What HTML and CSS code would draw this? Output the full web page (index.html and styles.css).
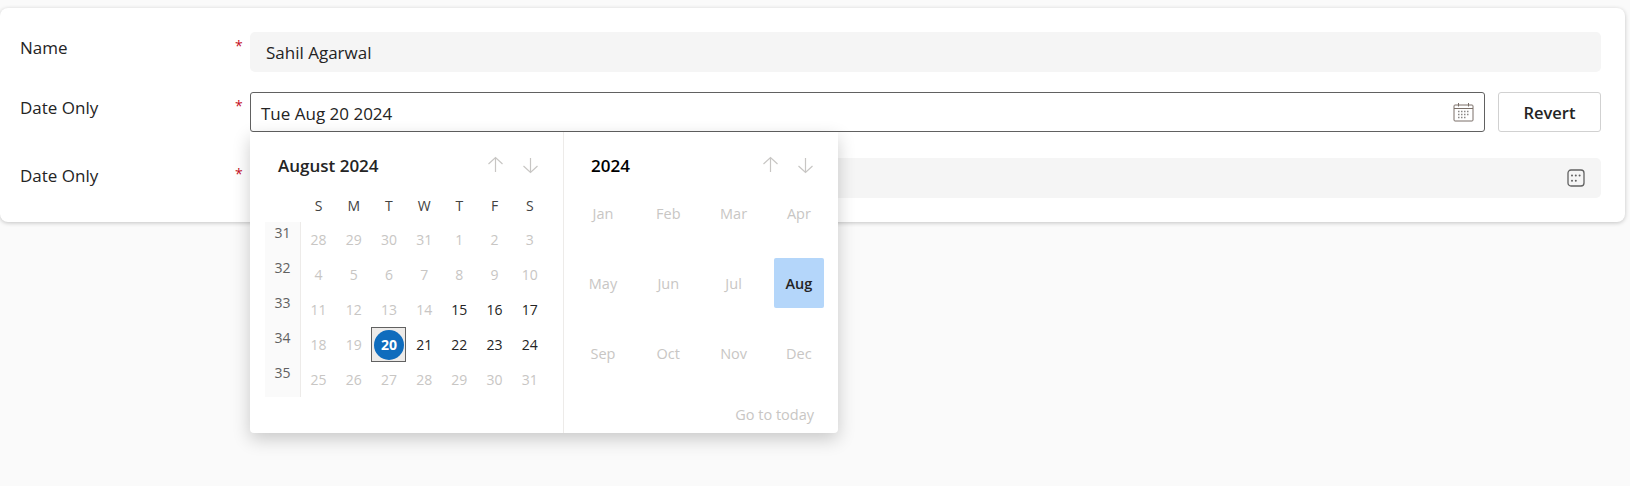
FILE: index.html
```html
<!DOCTYPE html>
<html lang="en">
<head>
    <meta charset="UTF-8">
    <meta name="viewport" content="width=device-width, initial-scale=1.0">
    <title>Date Only</title>
    <link rel="stylesheet" href="styles.css">
</head>
<body>
    <div class="card">
        <div class="row">
            <div class="label">Name</div>
            <div class="star">*</div>
            <div class="field readonly"><span class="name-value">Sahil Agarwal</span></div>
        </div>
        <div class="row row-date">
            <div class="label">Date Only</div>
            <div class="star">*</div>
            <div class="date-wrap">
                <div class="field active">
                    <span>Tue Aug 20 2024</span>
                    <svg class="cal-icon" width="21" height="20" viewBox="0 0 21 20" fill="none">
                        <rect x="1" y="3" width="19" height="16" rx="1" stroke="#7a6f68"/>
                        <path d="M1 6.5H20" stroke="#7a6f68"/>
                        <path d="M5.5 1V4.5M15.5 1V4.5" stroke="#7a6f68"/>
                        <path d="M5 9.5H16M5 12.5H16M5 15.5H13" stroke="#8a8886" stroke-width="1.4" stroke-dasharray="1.5 1.5"/>
                    </svg>
                </div>
                <div class="popup">
                    <div class="days-panel">
                        <div class="panel-head">
                            <span class="panel-title">August 2024</span>
                            <div class="arrows">
                                <svg width="35" height="20" viewBox="0 0 35 20" fill="none"><path d="M10.5 9L17.5 2.5L24.5 9M17.5 3V17" stroke="#c8c6c4" stroke-width="1.2"/></svg>
                                <svg width="35" height="20" viewBox="0 0 35 20" fill="none"><path d="M10.5 11L17.5 17.5L24.5 11M17.5 3V17" stroke="#c8c6c4" stroke-width="1.2"/></svg>
                            </div>
                        </div>
                        <div class="weekdays">
                            <span>S</span><span>M</span><span>T</span><span>W</span><span>T</span><span>F</span><span>S</span>
                        </div>
                        <div class="month-body">
                            <div class="weeks">
                                <span>31</span><span>32</span><span>33</span><span>34</span><span>35</span>
                            </div>
                            <div class="days">
                                <span>28</span><span>29</span><span>30</span><span>31</span><span>1</span><span>2</span><span>3</span>
                                <span>4</span><span>5</span><span>6</span><span>7</span><span>8</span><span>9</span><span>10</span>
                                <span>11</span><span>12</span><span>13</span><span>14</span><span class="on">15</span><span class="on">16</span><span class="on">17</span>
                                <span>18</span><span>19</span><span class="today"><b>20</b></span><span class="on">21</span><span class="on">22</span><span class="on">23</span><span class="on">24</span>
                                <span>25</span><span>26</span><span>27</span><span>28</span><span>29</span><span>30</span><span>31</span>
                            </div>
                        </div>
                    </div>
                    <div class="months-panel">
                        <div class="panel-head">
                            <span class="panel-title year">2024</span>
                            <div class="arrows">
                                <svg width="35" height="20" viewBox="0 0 35 20" fill="none"><path d="M10.5 9L17.5 2.5L24.5 9M17.5 3V17" stroke="#c8c6c4" stroke-width="1.2"/></svg>
                                <svg width="35" height="20" viewBox="0 0 35 20" fill="none"><path d="M10.5 11L17.5 17.5L24.5 11M17.5 3V17" stroke="#c8c6c4" stroke-width="1.2"/></svg>
                            </div>
                        </div>
                        <div class="months">
                            <span>Jan</span><span>Feb</span><span>Mar</span><span>Apr</span>
                            <span>May</span><span>Jun</span><span>Jul</span><span class="current">Aug</span>
                            <span>Sep</span><span>Oct</span><span>Nov</span><span>Dec</span>
                        </div>
                        <div class="today-link">Go to today</div>
                    </div>
                </div>
            </div>
            <button class="revert">Revert</button>
        </div>
        <div class="row row-last">
            <div class="label">Date Only</div>
            <div class="star">*</div>
            <div class="field readonly">
                <svg class="grid-icon" width="18" height="18" viewBox="0 0 18 18" fill="#616161">
                    <rect x="1" y="1" width="16" height="16" rx="3" fill="none" stroke="#616161" stroke-width="1.3"/>
                    <circle cx="5" cy="6.5" r="1"/>
                    <circle cx="8.8" cy="6.5" r="1"/>
                    <circle cx="12.6" cy="6.5" r="1"/>
                    <circle cx="5" cy="11.8" r="1"/>
                    <circle cx="8.8" cy="11.8" r="1"/>
                </svg>
            </div>
        </div>
    </div>
</body>
</html>
```

FILE: styles.css
```css
html, body{
    height: 100%;
}
body{
    margin: 0;
    box-sizing: border-box;
    padding-top: 8px;
    background-color: #fafafa;
    font-family: "Open Sans", "Noto Sans", sans-serif;
    font-size: 17px;
    color: #242424;
}
.card{
    width: 1625px;
    height: 214px;
    box-sizing: border-box;
    padding: 24px 24px 0 20px;
    background-color: #fff;
    border-radius: 8px;
    box-shadow: 0 1px 4px rgba(0, 0, 0, 0.22);
}
.row{
    display: flex;
    height: 40px;
}
.row-date{
    margin-top: 20px;
}
.row-last{
    margin-top: 26px;
}
.label{
    width: 215px;
    padding-top: 5px;
    line-height: 22px;
}
.star{
    width: 15px;
    color: #c50f1f;
    line-height: 22px;
    padding-top: 3px;
    font-size: 14px;
}
.row-last .label{
    padding-top: 7px;
}
.row-last .star{
    padding-top: 5px;
}
.field{
    flex: 1;
    display: flex;
    align-items: center;
    justify-content: space-between;
    box-sizing: border-box;
    height: 40px;
}
.readonly{
    background-color: #f5f5f5;
    border-radius: 5px;
    padding: 0 16px;
}
.active{
    background-color: #fff;
    border: 1px solid #616161;
    border-radius: 3px;
    padding: 2px 10px 0;
}
.cal-icon{
    display: block;
    margin-top: -2px;
}
.grid-icon{
    display: block;
    margin-left: auto;
}
.date-wrap{
    flex: 1;
    position: relative;
}
.revert{
    width: 103px;
    height: 40px;
    margin-left: 13px;
    padding-top: 2px;
    background-color: #fff;
    border: 1px solid #d1d1d1;
    border-radius: 3px;
    font-family: inherit;
    font-size: 16.5px;
    font-weight: 600;
    color: #242424;
}

/* calendar dropdown */
.popup{
    position: absolute;
    top: 40px;
    left: 0;
    z-index: 5;
    display: flex;
    width: 588px;
    height: 301px;
    background-color: #fff;
    border-radius: 0 0 4px 4px;
    box-shadow: 0 6px 18px rgba(0, 0, 0, 0.2);
}
.days-panel{
    width: 313px;
    border-right: 1px solid #edebe9;
    padding-top: 16px;
}
.months-panel{
    flex: 1;
    padding-top: 16px;
}
.panel-head{
    display: flex;
    align-items: center;
    justify-content: space-between;
    height: 34px;
    padding: 0 15px 0 27px;
}
.days-panel .panel-head{
    padding-left: 28px;
}
.panel-title{
    font-weight: 600;
    font-size: 17px;
}
.year{
    color: #000;
}
.arrows{
    display: flex;
}
.arrows svg{
    display: block;
}
.weekdays{
    display: grid;
    grid-template-columns: repeat(7, 35.2px);
    margin-left: 51px;
    height: 34px;
    padding-top: 6px;
    align-items: center;
    justify-items: center;
    font-size: 14px;
    color: #424242;
}
.month-body{
    display: flex;
    margin-left: 15px;
}
.weeks{
    display: flex;
    flex-direction: column;
    width: 35px;
    background-color: #fafafa;
    border-right: 1px solid #edebe9;
    font-size: 14px;
    color: #616161;
}
.weeks span{
    height: 35px;
    line-height: 21px;
    text-align: center;
}
.days{
    display: grid;
    grid-template-columns: repeat(7, 35.2px);
    grid-auto-rows: 35px;
    align-items: center;
    justify-items: center;
    font-size: 14px;
    color: #c8c6c4;
}
.days .on{
    color: #242424;
}
.today{
    display: flex;
    align-items: center;
    justify-content: center;
    box-sizing: border-box;
    width: 35px;
    height: 35px;
    background-color: #edebe9;
    border: 1px solid #616161;
}
.today b{
    width: 30px;
    height: 30px;
    line-height: 30px;
    text-align: center;
    border-radius: 50%;
    background-color: #0f6cbd;
    color: #fff;
    font-weight: 700;
}
.months{
    display: grid;
    grid-template-columns: repeat(4, 50px);
    grid-auto-rows: 50px;
    column-gap: 15.3px;
    row-gap: 20px;
    margin: 6px 0 0 14px;
    font-size: 14.5px;
    color: #c8c6c4;
}
.months span{
    display: flex;
    align-items: center;
    justify-content: center;
}
.months .current{
    background-color: #b4d6fa;
    border-radius: 2px;
    color: #242424;
    font-weight: 600;
}
.today-link{
    margin: 27px 24px 0 0;
    line-height: 20px;
    text-align: right;
    font-size: 14.5px;
    color: #c8c6c4;
}
```
